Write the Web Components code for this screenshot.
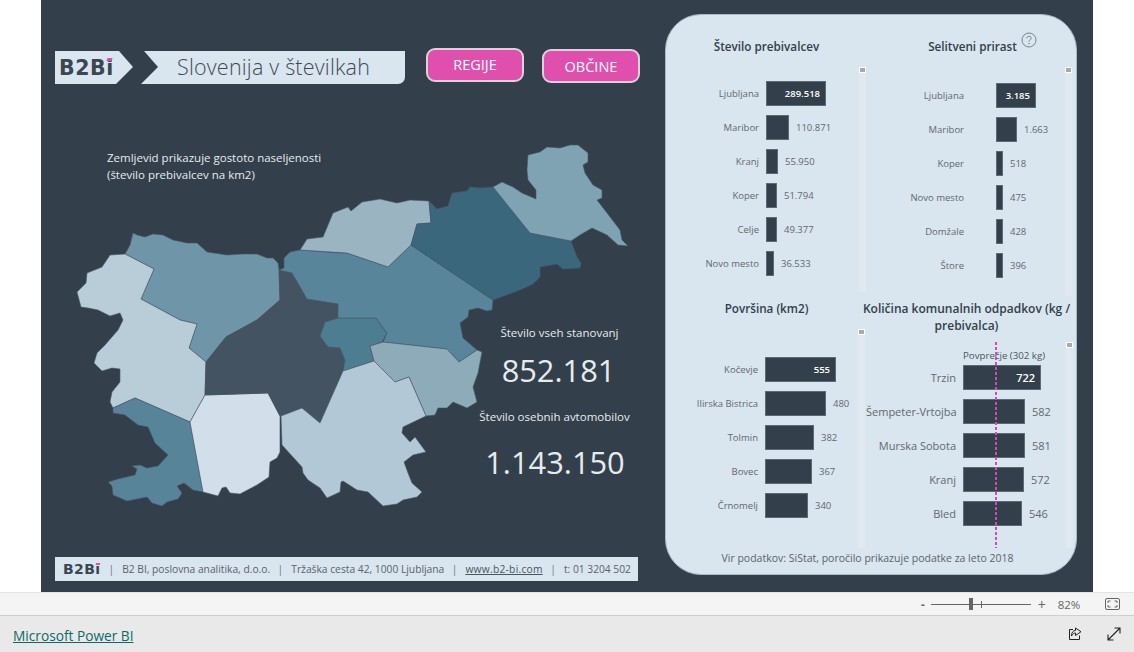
<!DOCTYPE html>
<html lang="sl"><head><meta charset="utf-8"><title>Slovenija v številkah</title>
<style>
html,body{margin:0;padding:0;background:#fff;font-family:"Open Sans","Noto Sans",sans-serif}
body{width:1134px;height:652px;overflow:hidden;display:flex;flex-direction:column}
</style></head><body>
<report-page>
  <div slot="left">
    <report-header></report-header>
    <si-map></si-map>
    <legal-strip></legal-strip>
  </div>
  <stats-panel slot="right">
    <bar-chart heading="Število prebivalcev" data="Ljubljana|289.518|60|in;Maribor|110.871|23;Kranj|55.950|12;Koper|51.794|11;Celje|49.377|11;Novo mesto|36.533|8" style="--lw:92px;--bg:7px;--tm:12px;--rp:14px;--bh:225px;--sbx:0px"></bar-chart>
    <bar-chart heading="Selitveni prirast" help data="Ljubljana|3.185|40|in;Maribor|1.663|21;Koper|518|7;Novo mesto|475|6;Domžale|428|6;Štore|396|5" style="--lw:98px;--bg:32px;--tm:12px;--rp:16px;--bh:229px;--tl:7px;--tr:0px;--sbx:0px"></bar-chart>
    <bar-chart heading="Površina (km2)" data="Kočevje|555|71|in;Ilirska Bistrica|480|61;Tolmin|382|49;Bovec|367|47;Črnomelj|340|43" style="--lw:91px;--bg:7px;--tm:12px;--rp:28px;--bh:219px;--sbx:1px"></bar-chart>
    <bar-chart heading="Količina komunalnih odpadkov (kg / prebivalca)" avg data="Trzin|722|78|in;Šempeter-Vrtojba|582|62;Murska Sobota|581|62;Kranj|572|61;Bled|546|59" style="--lw:90px;--bg:7px;--tm:8px;--rp:23px;--bh:206px;--fs:11px;--tfs:12px;--tl:-4px;--tr:1px;--sbx:-1px"></bar-chart>
    <div slot="note">Vir podatkov: SiStat, poročilo prikazuje podatke za leto 2018</div>
  </stats-panel>
</report-page>
<viewer-bar></viewer-bar>
<viewer-footer></viewer-footer>

<script>
function def(name,html,init){
  customElements.define(name,class extends HTMLElement{
    connectedCallback(){
      if(this.shadowRoot)return;
      const r=this.attachShadow({mode:'open'});
      r.innerHTML=typeof html==='function'?html(this):html;
      if(init)init(this,r);
    }
  });
}

def('report-page',`<style>
:host{display:flex;width:1052px;height:592px;margin-left:41px;background:#333f4a;flex:none}
.l{width:624px;flex:none;display:block}
.r{flex:none;display:block;width:412px;margin-top:14px}
</style><slot class="l" name="left"></slot><slot class="r" name="right"></slot>`);

def('b2b-logo',h=>{const s=+h.getAttribute('size')||20;return `<style>
:host{display:inline-block;line-height:1}
b{font:700 ${s}px "DejaVu Sans",sans-serif;color:#3a4651;letter-spacing:${s*.03}px;position:relative;display:inline-block}
i{position:absolute;right:${s*.06}px;top:${s*.13}px;width:${s*.26}px;height:${s*.14}px;background:#e04fae;transform:skewX(-25deg)}
</style><b>B2Bi<i></i></b>`});

def('report-header',`<style>
:host{display:flex;align-items:flex-start;height:100px;box-sizing:border-box;padding:48px 0 0 14px;gap:21px}
.banner{position:relative;width:350px;height:33px;margin-top:3px;background:#d9e5ef;border-bottom-right-radius:7px;display:flex;align-items:center;box-sizing:border-box;padding-left:4px}
svg{position:absolute;left:0;top:0}
.t{position:absolute;left:122px;top:0;font:300 21.5px/31px "Open Sans",sans-serif;color:#3f4a55;white-space:nowrap;letter-spacing:.2px}
.btns{display:flex;gap:18px}
a{box-sizing:border-box;width:98px;height:34px;border:2px solid #dcd0dc;border-radius:9px;background:#e04fae;color:#fff;font:400 14.5px/30px "Open Sans",sans-serif;text-align:center;display:block}
a+a{margin-top:1px;line-height:32px}
</style>
<div class="banner"><b2b-logo size="20.5"></b2b-logo>
<svg width="120" height="33"><polygon points="64,0 89,0 103,16 86,33 61,33 78,16" fill="#333f4a"/></svg>
<span class="t">Slovenija v številkah</span></div>
<div class="btns"><a>REGIJE</a><a>OBČINE</a></div>`);

const REGIONS=[
['#6f96a8','133,233 137,235 145,237 153,234 163,235 173,240 187,243 197,243 207,252 227,255 243,254 257,254 267,258 273,258 278,263 279,270 280,300 257,320 226,337 206,362 189,348 197,324 180,320 141,299 154,269 125,254 130,245'],
['#b9cdd9','125,254 110,255 102,267 87,273 86,283 77,292 81,307 88,308 98,310 110,316 120,313 123,320 118,330 105,345 97,353 94,363 102,371 112,368 120,369 120,382 112,392 110,402 113,408 135,398 190,422 205,395 206,362 189,348 197,324 180,320 141,299 154,269'],
['#58849a','113,408 135,398 190,422 203,492 193,490 184,483 177,486 182,493 178,499 167,502 162,506 152,503 147,497 127,501 113,495 112,486 108,482 118,479 135,475 137,469 132,466 140,465 147,468 158,466 168,455 155,443 148,427 138,425 125,415 113,413'],
['#d2dfea','190,422 205,395 268,393 280,416 280,452 277,458 270,462 269,477 257,485 240,494 230,493 226,487 222,488 218,496 203,492'],
['#435361','279,270 292,273 307,299 338,304 338,318 325,322 320,336 328,347 340,348 345,360 343,371 320,423 302,408 281,416 280,416 268,393 205,395 206,362 226,337 257,320 280,300'],
['#4d7d91','338,318 376,318 387,333 382,342 370,346 374,361 343,371 345,360 340,348 328,347 320,336 325,322'],
['#58859a','284,258 290,252 300,250 340,253 347,253 388,267 411,245 493,300 492,310 487,311 478,308 469,310 468,317 460,323 463,338 477,350 459,362 447,349 383,342 387,333 376,318 338,318 338,304 307,299 292,273 279,270 284,268'],
['#9ab4c1','300,250 307,239 323,237 333,213 348,207 351,211 362,202 380,199 397,203 410,200 429,201 431,223 417,224 411,245 388,267 347,253'],
['#3b677c','429,201 437,209 448,206 452,193 467,191 470,187 480,188 493,187 530,233 571,241 577,257 581,263 580,268 563,269 557,264 540,267 540,277 533,284 520,290 493,300 411,245 417,224 431,223'],
['#80a3b3','493,187 502,182 513,187 522,193 536,199 536,190 528,180 527,170 528,155 540,152 547,147 560,148 570,145 578,145 588,153 588,162 583,165 585,173 593,185 602,190 602,198 597,200 607,213 620,230 622,240 628,246 618,245 607,235 592,228 580,235 571,241 530,233'],
['#8dabb9','370,346 383,342 447,349 459,362 477,350 482,352 478,373 473,387 477,402 467,408 453,402 447,408 438,408 435,415 426,416 409,377 395,382 374,361'],
['#b3c8d6','374,361 395,382 409,377 426,416 403,427 402,433 410,442 415,437 426,452 413,455 404,462 408,473 412,483 422,492 417,497 403,500 397,504 383,506 368,492 357,490 343,481 341,482 340,492 327,498 320,488 308,480 303,473 302,467 282,445 281,416 302,408 320,423 343,371']
];
def('si-map',`<style>
:host{display:block;position:relative;height:457px;color:#e6ebef}
svg{position:absolute;left:0;top:0;overflow:visible}
.cap,.k,.v{position:absolute;white-space:nowrap;font-family:"Open Sans",sans-serif}
.cap{left:66px;top:49px;font-size:11.5px;line-height:17px}
.k{font-size:11.5px;line-height:16px;text-align:center;width:200px}
.v{font-size:30.8px;line-height:40px;font-weight:400;text-align:center;width:200px}
</style>
<svg width="625" height="457" viewBox="41 100 625 457">${REGIONS.map(r=>`<polygon points="${r[1]}" fill="${r[0]}" stroke="#46586a" stroke-width=".6" stroke-linejoin="round"/>`).join('')}</svg>
<div class="cap">Zemljevid prikazuje gostoto naseljenosti<br>(število prebivalcev na km2)</div>
<div class="k" style="left:418.500px;top:225px">Število vseh stanovanj</div>
<div class="v" style="left:417.500px;top:250px">852.181</div>
<div class="k" style="left:413.500px;top:309px">Število osebnih avtomobilov</div>
<div class="v" style="left:414px;top:342px">1.143.150</div>`);

def('legal-strip',`<style>
:host{display:flex;align-items:center;width:583px;height:24px;margin:0 0 0 14px;padding-left:8px;box-sizing:border-box;background:#d9e5ef;color:#59626c;font:400 10.250px/24px "Open Sans",sans-serif;white-space:nowrap}
b2b-logo{width:38px;flex:none}
span{flex:none}
.s{margin:0 8px 0 7.500px;color:#6b7480}
u{color:#4b5560;letter-spacing:.25px}
</style><b2b-logo size="14"></b2b-logo><span class="s">|</span><span>B2 BI, poslovna analitika, d.o.o.</span><span class="s">|</span><span>Tržaška cesta 42, 1000 Ljubljana</span><span class="s">|</span><u>www.b2-bi.com</u><span class="s">|</span><span>t: 01 3204 502</span>`);

def('stats-panel',`<style>
:host{display:grid;box-sizing:border-box;width:412px;height:561px;background:#d9e5ef;border:1px solid #aab9c6;border-radius:36px;padding:23px 4px 0 1px;grid-template-columns:199px 206px;grid-template-rows:262px 247px 1fr}
.n{grid-column:1/3;text-align:center;font:400 10.500px/22px "Open Sans",sans-serif;color:#5b636d;padding-right:4px}
</style><slot></slot><div class="n"><slot name="note"></slot></div>`);

def('bar-chart',h=>{
 const rows=h.getAttribute('data').split(';').map(s=>s.split('|'));
 const help=h.hasAttribute('help')?`<svg class="help" width="16" height="16" viewBox="0 0 16 16"><circle cx="8" cy="8" r="7" fill="none" stroke="#7b838b" stroke-width="1"/><path d="M5.800 6.300c0-1.200 1-2 2.200-2s2.200.8 2.200 1.900c0 1.600-2.200 1.600-2.200 3.300" fill="none" stroke="#7b838b" stroke-width="1"/><circle cx="8" cy="11.500" r=".7" fill="#7b838b"/></svg>`:'';
 const avg=h.hasAttribute('avg')?`<div class="avgline"></div><div class="avgt">Povprečje (302 kg)</div>`:'';
 return `<style>
:host{display:block;position:relative;font-family:"Open Sans",sans-serif;font-size:var(--fs,9.5px);color:#636870}
.title{margin:0 var(--tr,0) 0 var(--tl,0);text-align:center;font-weight:600;font-size:var(--tfs,11.7px);line-height:17px;color:#333f4a;position:relative}
.help{position:absolute;right:35px;top:-6px}
.body{display:flex;margin-top:var(--tm);height:var(--bh);position:relative}
.rows{flex:1;padding-top:var(--rp);box-sizing:border-box;display:flex;flex-direction:column;gap:9px}
.row{display:flex;height:25px;align-items:center;flex:none}
.l{width:var(--lw);flex:none;text-align:right;white-space:nowrap}
.b{height:25px;box-sizing:border-box;margin-left:var(--bg);background:#333f4a;border:1px solid #5c6a76;color:#fff;font-weight:600;text-align:right;padding-right:5px;line-height:23px;flex:none;position:relative}
.v{margin-left:7px;white-space:nowrap}
.sb{width:7px;background:#e2e8f0;position:relative;flex:none;margin-right:var(--sbx)}
.sb::before{content:"";position:absolute;left:0;top:0;width:7px;height:6px;box-sizing:border-box;background:#a9a9a9;border:1px solid #fff}
.avgline{position:absolute;left:129px;top:0;bottom:0;width:2px;background:repeating-linear-gradient(#d44aae 0 3px,transparent 3px 5px);z-index:1}
.avgt{position:absolute;left:97px;top:7px;font-size:9.700px;line-height:14px;white-space:nowrap;color:#4d5660}
</style>
<div class="title">${h.getAttribute('heading')}${help}</div>
<div class="body"><div class="rows">${rows.map(r=>`<div class="row"><span class="l">${r[0]}</span><span class="b" style="width:${r[2]}px">${r[3]?r[1]:''}</span>${r[3]?'':`<span class="v">${r[1]}</span>`}</div>`).join('')}</div><div class="sb"></div>${avg}</div>`;
});

def('viewer-bar',`<style>
:host{display:flex;align-items:center;box-sizing:border-box;height:24px;background:#f4f4f4;border-top:1px solid #e4e4e4;border-bottom:1px solid #cfcfcf;padding-left:921px;color:#666;font:400 11.500px "Open Sans",sans-serif;flex:none}
.sl{width:100px;height:1px;background:#666;margin:0 7px 0 6px;position:relative}
.th{position:absolute;left:38px;top:-6px;width:4px;height:12px;background:#666}
.ti{position:absolute;left:50px;top:-3px;width:1px;height:7px;background:#666}
.p{margin-left:12px;width:35px}
svg{margin-left:12px}
</style><span style="font-weight:700">-</span><div class="sl"><div class="th"></div><div class="ti"></div></div><span style="font-size:14px">+</span><span class="p">82%</span>
<svg width="15" height="12" viewBox="0 0 15 12" fill="none" stroke="#666"><rect x=".5" y=".5" width="14" height="11" rx="1.500"/><path d="M3 5V3h2.500M12 5V3H9.500M3 7v2h2.500M12 7v2H9.500"/></svg>`);

def('viewer-footer',`<style>
:host{display:flex;align-items:center;height:36px;box-sizing:border-box;background:#e9e9e9;padding-left:13px;flex:1;position:relative}
a{color:#0b6a69;text-decoration:underline;font:400 13.700px "Open Sans",sans-serif;margin-top:3px}
.i{display:flex;gap:25px;margin-left:auto;margin-right:13px}
</style><a>Microsoft Power BI</a>
<div class="i"><svg width="14" height="14" viewBox="0 0 14 14" fill="none" stroke="#222" stroke-width="1"><path d="M5 2.500H1.500v10h10V8.500"/><path d="M7.500 1v2.500C5 3.500 3.500 5.500 3.500 9 5 6.500 6 6 7.500 6v2.500L13 4.700z"/></svg>
<svg width="14" height="14" viewBox="0 0 14 14" fill="none" stroke="#222" stroke-width="1.100"><path d="M1 13 13 1M7.500 1H13v5.500M1 7.500V13h5.500"/></svg></div>`);
</script>
</body></html>
